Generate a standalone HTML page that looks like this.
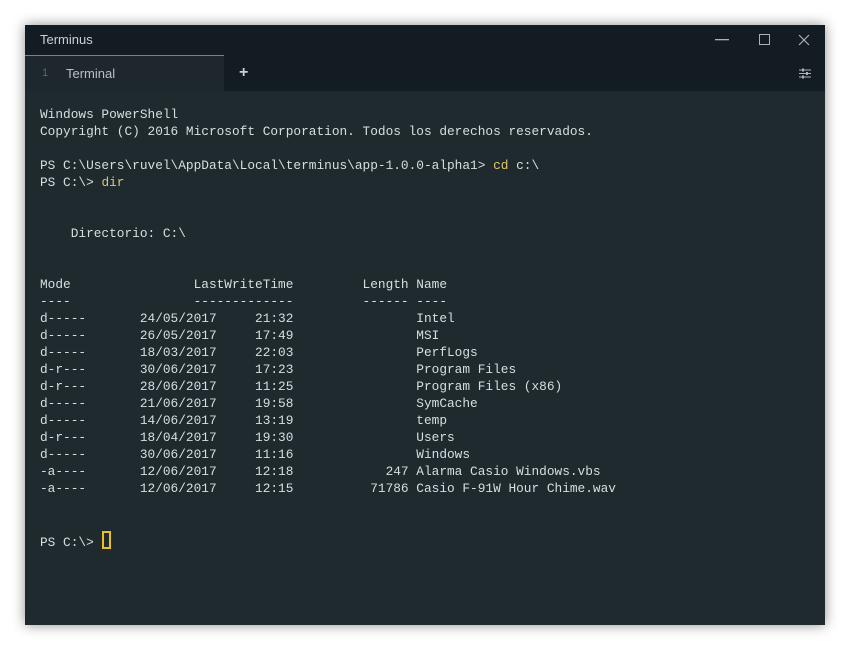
<!DOCTYPE html>
<html><head><meta charset="utf-8"><style>
html,body{margin:0;padding:0;width:850px;height:650px;background:#fff;overflow:hidden}
.win{position:absolute;left:25px;top:25px;width:800px;height:600px;background:#1f2a2f;box-shadow:0 0 12px rgba(0,0,0,.45)}
.title{position:absolute;left:0;top:0;width:800px;height:30px;background:#131b23;}
.title span{position:absolute;left:15px;top:7px;font:13px "Liberation Sans",sans-serif;color:#c9d0d6}
.tabs{position:absolute;left:0;top:30px;width:800px;height:36px;background:#131b23}
.tab{position:absolute;left:0;top:0;width:199px;height:36px;background:#1d272d;border-top:1px solid #4a90b8;box-sizing:border-box}
.tab .n{position:absolute;left:17px;top:11px;font:11px "Liberation Sans",sans-serif;color:#5c676e}
.tab .t{position:absolute;left:41px;top:10px;font:13px "Liberation Sans",sans-serif;color:#b8c0c6}
.plus{position:absolute;left:214px;top:9px;font:bold 16px "Liberation Sans",sans-serif;color:#c9d0d6}
pre{position:absolute;left:15px;top:81px;margin:0;font:12.8px/17px "Liberation Mono",monospace;color:#d8dee0}
.y{color:#e2c572}
.cur{display:inline-block;width:5px;height:14px;border:2px solid #e8c020;vertical-align:-3px;margin-left:1px}
svg{position:absolute}
</style></head><body>
<div class="win">
<div class="title"><span>Terminus</span>
<svg style="left:690px;top:14px" width="14" height="2"><rect width="14" height="1.3" fill="#aab2b8"/></svg>
<svg style="left:734px;top:9px" width="12" height="12"><rect x=".5" y=".5" width="10" height="10" fill="none" stroke="#aab2b8"/></svg>
<svg style="left:773px;top:9px" width="12" height="12"><path d="M1 1L11 11M11 1L1 11" stroke="#aab2b8" stroke-width="1.2"/></svg>
</div>
<div class="tabs">
<div class="tab"><span class="n">1</span><span class="t">Terminal</span></div>
<span class="plus">+</span>
<svg style="left:774px;top:13px" width="12" height="11"><path d="M0 2H12M0 5.5H12M0 9H12" stroke="#aab2b8" stroke-width="1"/><rect x="3" y="0.5" width="2" height="3" fill="#aab2b8"/><rect x="7" y="4" width="2" height="3" fill="#aab2b8"/><rect x="3" y="7.5" width="2" height="3" fill="#aab2b8"/></svg>
</div>
<pre>Windows PowerShell
Copyright (C) 2016 Microsoft Corporation. Todos los derechos reservados.

PS C:\Users\ruvel\AppData\Local\terminus\app-1.0.0-alpha1&gt; <span class="y">cd</span> c:\
PS C:\&gt; <span class="y">dir</span>


    Directorio: C:\


Mode                LastWriteTime         Length Name
----                -------------         ------ ----
d-----       24/05/2017     21:32                Intel
d-----       26/05/2017     17:49                MSI
d-----       18/03/2017     22:03                PerfLogs
d-r---       30/06/2017     17:23                Program Files
d-r---       28/06/2017     11:25                Program Files (x86)
d-----       21/06/2017     19:58                SymCache
d-----       14/06/2017     13:19                temp
d-r---       18/04/2017     19:30                Users
d-----       30/06/2017     11:16                Windows
-a----       12/06/2017     12:18            247 Alarma Casio Windows.vbs
-a----       12/06/2017     12:15          71786 Casio F-91W Hour Chime.wav


PS C:\&gt; <span class="cur"></span></pre>
</div>
</body></html>
